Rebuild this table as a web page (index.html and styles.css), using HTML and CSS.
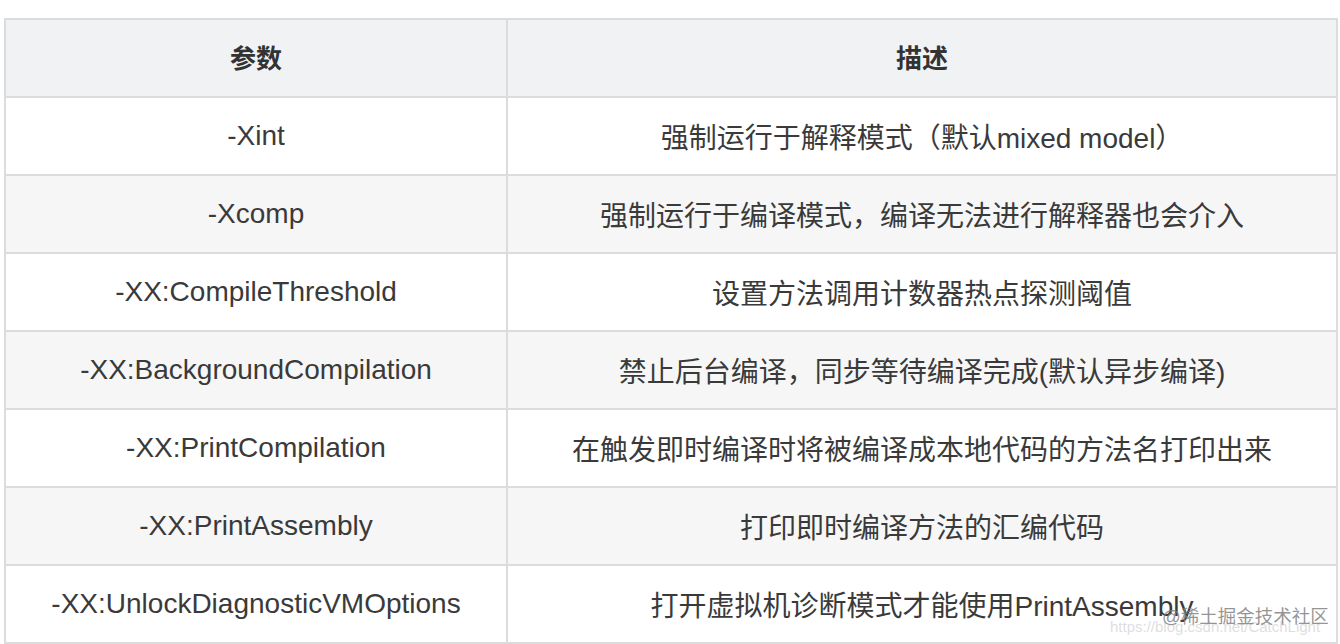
FILE: index.html
```html
<!DOCTYPE html>
<html lang="zh-CN">
<head>
<meta charset="utf-8">
<title>JIT 参数</title>
<link rel="stylesheet" href="styles.css">
</head>
<body>
<div class="wrap">
  <div class="grid">
    <div class="cell head">参数</div>
    <div class="cell head">描述</div>

    <div class="cell">-Xint</div>
    <div class="cell">强制运行于解释模式（默认mixed model）</div>

    <div class="cell alt">-Xcomp</div>
    <div class="cell alt">强制运行于编译模式，编译无法进行解释器也会介入</div>

    <div class="cell">-XX:CompileThreshold</div>
    <div class="cell">设置方法调用计数器热点探测阈值</div>

    <div class="cell alt">-XX:BackgroundCompilation</div>
    <div class="cell alt">禁止后台编译，同步等待编译完成(默认异步编译)</div>

    <div class="cell">-XX:PrintCompilation</div>
    <div class="cell">在触发即时编译时将被编译成本地代码的方法名打印出来</div>

    <div class="cell alt">-XX:PrintAssembly</div>
    <div class="cell alt">打印即时编译方法的汇编代码</div>

    <div class="cell">-XX:UnlockDiagnosticVMOptions</div>
    <div class="cell">打开虚拟机诊断模式才能使用PrintAssembly</div>
  </div>
  <div class="wm-url">https://blog.csdn.net/CatchLight</div>
  <div class="wm">@稀土掘金技术社区</div>
</div>
</body>
</html>
```
FILE: styles.css
```css
html, body {
  margin: 0;
  padding: 0;
  background: #ffffff;
}
body {
  padding: 18px 0 0 4px;
  font-family: "Liberation Sans", "Noto Sans CJK SC", sans-serif;
  color: #3a3a3a;
}
.wrap {
  position: relative;
  width: 1334px;
}
.grid {
  display: grid;
  grid-template-columns: 502px 830px;
  border-left: 2px solid #dcdcdc;
  border-top: 2px solid #dcdcdc;
}
.cell {
  height: 76px;
  display: flex;
  align-items: center;
  justify-content: center;
  border-right: 2px solid #dcdcdc;
  border-bottom: 2px solid #dcdcdc;
  font-size: 28px;
  white-space: nowrap;
  background: #ffffff;
}
.cell.head {
  background: #f1f2f4;
  font-weight: bold;
  font-size: 26px;
  color: #333333;
  padding-bottom: 3px;
  box-sizing: border-box;
  height: 78px;
}
.cell.alt {
  background: #f6f6f6;
}
.wm-url {
  position: absolute;
  left: 1106px;
  top: 600px;
  font-size: 15px;
  color: rgba(200, 200, 200, 0.6);
  white-space: nowrap;
}
.wm {
  position: absolute;
  left: 1158px;
  top: 584px;
  font-size: 18.5px;
  color: rgba(130, 130, 130, 0.85);
  white-space: nowrap;
}
```
